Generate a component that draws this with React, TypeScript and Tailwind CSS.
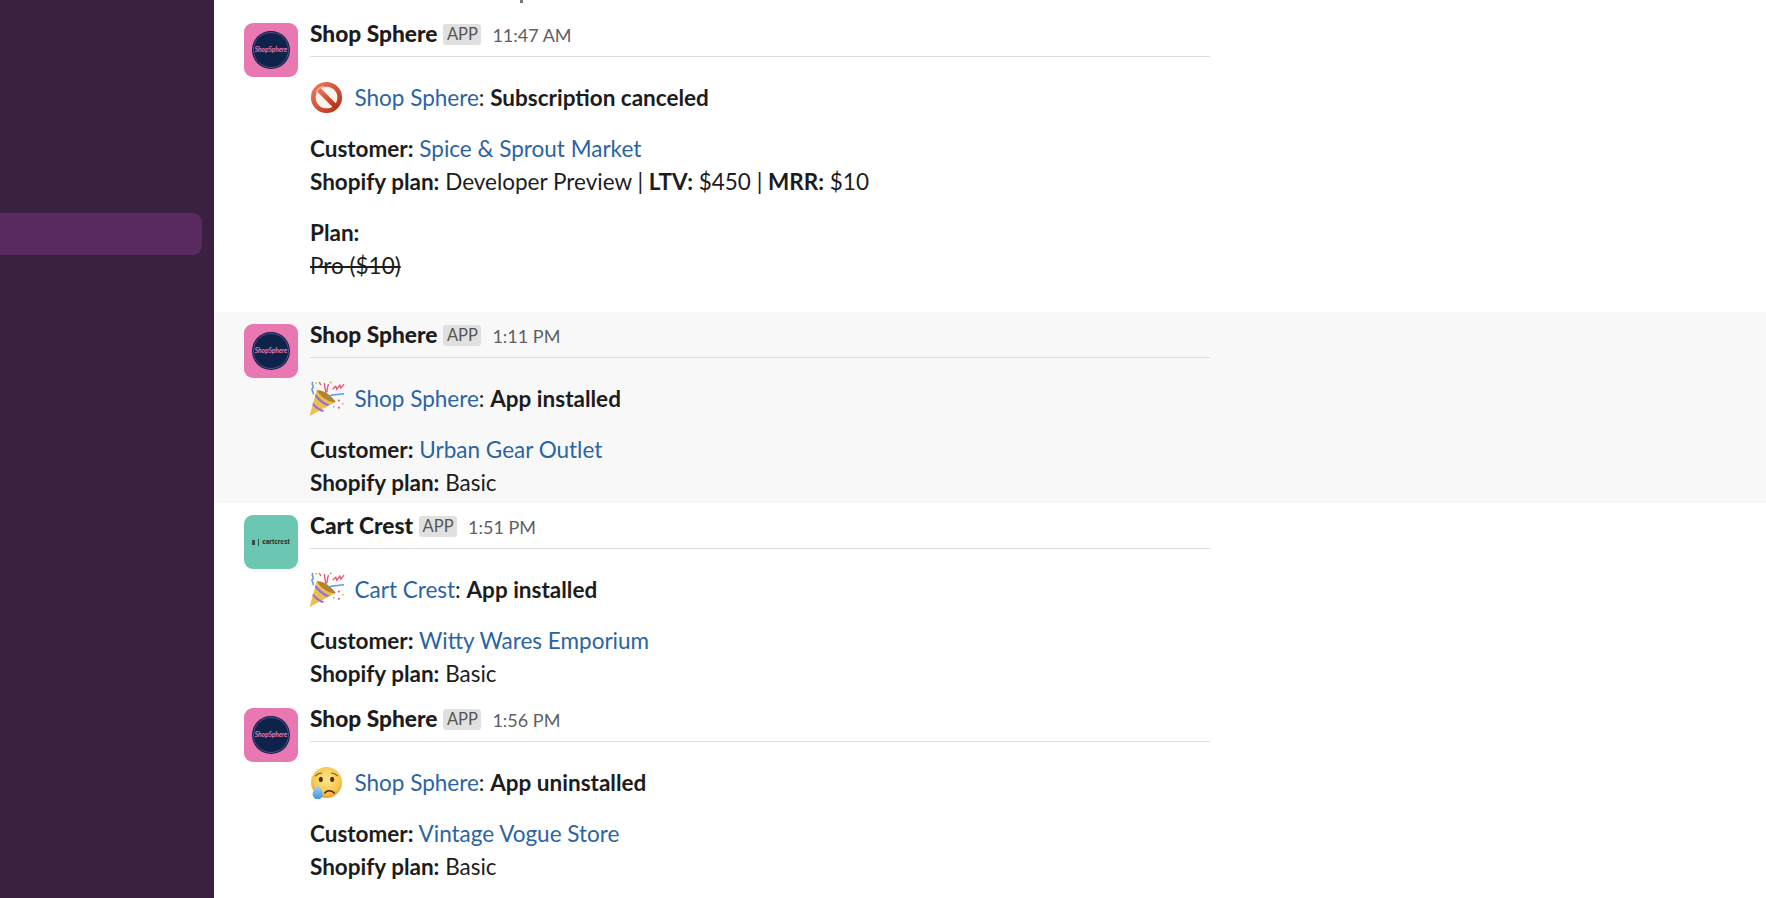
import type { ReactNode } from "react";

function BanEmoji() {
  return (
    <svg viewBox="0 0 32 32" className="w-[33px] h-[33px] shrink-0">
      <defs>
        <linearGradient id="banRed" x1="0" y1="0" x2="1" y2="1">
          <stop offset="0" stopColor="#ea7a5c" />
          <stop offset="1" stopColor="#b5301a" />
        </linearGradient>
      </defs>
      <circle cx="16" cy="16" r="12.800" fill="#fdf3ee" stroke="url(#banRed)" strokeWidth="4.600" />
      <path d="M7 7 25 25" stroke="url(#banRed)" strokeWidth="4.600" />
      <path d="M6 11c1.500-3 4-5 7-5.800" stroke="#f6c0ad" strokeWidth="1" strokeLinecap="round" fill="none" />
    </svg>
  );
}

function PartyEmoji() {
  return (
    <svg viewBox="0 0 35 35" className="w-[36px] h-[36px] shrink-0">
      <path d="M.5 34 7.500 9 26 20.500Z" fill="#ecc04c" />
      <path d="M7.500 9c6-1 15 5.500 18.500 11.500-6 1-15-5-18.500-11.500Z" fill="#b5832a" />
      <path d="M4 21c3 3.500 6.500 6 11 8l-2.500 1.200c-4-2-7-4.200-9.200-7ZM6.500 12.500c3 4.500 8 8 13.500 10.500l-2.500 1.300c-5.500-2.500-9.500-6-11.700-9.500Z" fill="#9b6fd6" />
      <path d="M4 1c-3 2 2 4-.5 6s2 3.500.5 6" stroke="#5d9be8" strokeWidth="1.500" fill="none" />
      <path d="M10 1l1.500 3M15 2c0 3 1 7 1.500 10M19 3c-1 2-1.500 5-1.500 8" stroke="#e5547a" strokeWidth="1.300" fill="none" />
      <path d="M23 8l3-3 1 3 3-4 1 3 3-4" stroke="#e5547a" strokeWidth="1.300" fill="none" />
      <path d="M18 15c5-2 10-1.500 16-2.500" stroke="#5d9be8" strokeWidth="1.500" fill="none" />
      <circle cx="7" cy="2" r="1" fill="#f0b93a" />
      <circle cx="21" cy="1.500" r="1" fill="#8dc53e" />
      <circle cx="29" cy="19" r="1" fill="#e5547a" />
      <circle cx="33" cy="22" r="0.900" fill="#f0b93a" />
      <circle cx="29" cy="26" r="1" fill="#e5547a" />
      <circle cx="24" cy="25" r="0.800" fill="#5d9be8" />
    </svg>
  );
}

function CryEmoji() {
  return (
    <svg viewBox="0 0 32 32" className="w-[33px] h-[33px] shrink-0">
      <defs>
        <radialGradient id="cryFace" cx="0.5" cy="0.4" r="0.6">
          <stop offset="0" stopColor="#fde58a" />
          <stop offset="0.7" stopColor="#f8c94f" />
          <stop offset="1" stopColor="#ee9f2c" />
        </radialGradient>
        <linearGradient id="cryTear" x1="0" y1="0" x2="0" y2="1">
          <stop offset="0" stopColor="#a7dcf5" />
          <stop offset="1" stopColor="#3f93d8" />
        </linearGradient>
      </defs>
      <circle cx="16" cy="16" r="15" fill="url(#cryFace)" />
      <path d="M5.500 9.500c1.500-1.800 3.500-2.600 5.500-2.600M26.500 9.500c-1.500-1.800-3.500-2.600-5.500-2.600" stroke="#8a5a1e" strokeWidth="1.200" strokeLinecap="round" fill="none" />
      <ellipse cx="10.500" cy="13" rx="2" ry="2.500" fill="#4a2c12" />
      <ellipse cx="21.500" cy="13" rx="2" ry="2.500" fill="#4a2c12" />
      <path d="M14.500 26c2-2.500 6-2.800 9 .2" stroke="#4a2c12" strokeWidth="1.600" strokeLinecap="round" fill="none" />
      <path d="M7.500 18c-2.500 4-5 6.500-5 9.500a5 4.800 0 0 0 10 0c0-3-2.500-5.500-5-9.500Z" fill="url(#cryTear)" />
    </svg>
  );
}

function ShopAvatar() {
  return (
    <div className="w-[54px] h-[54px] shrink-0 rounded-[9px] bg-[#e877b2] flex items-center justify-center">
      <div className="w-[38px] h-[38px] rounded-full bg-[#0e2349] flex items-center justify-center">
        <div className="w-[36px] h-[36px] rounded-full border border-[#5b4a80] flex items-center justify-center">
          <span className="text-[6.5px] leading-none font-bold italic text-[#e877b2] whitespace-nowrap">ShopSphere</span>
        </div>
      </div>
    </div>
  );
}

function CartAvatar() {
  return (
    <div className="w-[54px] h-[54px] shrink-0 rounded-[9px] bg-[#6bc7b1] flex items-center justify-center gap-[3px]">
      <span className="w-[3px] h-[5px] bg-[#33514a]"></span>
      <span className="w-px h-[7px] bg-[#33514a]"></span>
      <span className="font-['Liberation_Sans',sans-serif] text-[6.5px] leading-none font-bold text-[#1d2a28]">cartcrest</span>
    </div>
  );
}

function Link({ children }: { children: ReactNode }) {
  return <span className="text-[#2a64a3]">{children}</span>;
}

type MessageProps = {
  app: string;
  time: string;
  event: string;
  customer: string;
  emoji: ReactNode;
  avatar: ReactNode;
  hovered?: boolean;
  children?: ReactNode;
};

function Message({ app, time, event, customer, emoji, avatar, hovered, children }: MessageProps) {
  return (
    <div className={`flex gap-3 pl-[30px] pt-3 pb-[4px] ${hovered ? "bg-[#f8f8f8]" : ""}`}>
      {avatar}
      <div className="w-[900px] -mt-[6px]">
        <div className="flex items-baseline h-[38px] border-b border-[#dddddd] box-content pb-px">
          <span className="font-black text-[22.7px] leading-[33px] text-[#1d1c1d]">{app}</span>
          <span className="ml-[6px] px-[3.5px] h-[21px] relative top-[-2px] rounded-[3px] bg-[#e0e0e0] text-[#555555] text-[16.5px] leading-[21px]">APP</span>
          <span className="ml-[11px] text-[18px] text-[#616061]">{time}</span>
        </div>
        <div className="flex items-center mt-6 h-[33px]">
          <div className="w-[33px] h-[33px] shrink-0 flex items-center justify-center">{emoji}</div>
          <p className="ml-[11.5px]">
            <Link>{app}</Link>: <b className="font-bold">{event}</b>
          </p>
        </div>
        <p className="mt-[18px]">
          <b>Customer:</b> <Link>{customer}</Link>
        </p>
        {children}
      </div>
    </div>
  );
}

export default function App() {
  return (
    <div className="flex h-[898px] overflow-hidden bg-white font-['Lato',sans-serif] text-[22.5px] leading-[33px] text-[#1d1c1d]">
      <aside className="w-[214px] shrink-0 bg-[#3b2140] pt-[213px]">
        <div className="h-[42px] mr-3 rounded-r-[9px] bg-[#582a5f]"></div>
      </aside>
      <main className="flex-1">
        {/* tail of a letter from the message scrolled off above */}
        <div className="ml-[306px] w-[3px] h-[3px] mb-[8px] bg-[#777777]"></div>
        <Message
          app="Shop Sphere"
          time="11:47 AM"
          event="Subscription canceled"
          customer="Spice & Sprout Market"
          emoji={<BanEmoji />}
          avatar={<ShopAvatar />}
        >
          <p>
            <b>Shopify plan:</b> Developer Preview | <b>LTV:</b> $450 | <b>MRR:</b> $10
          </p>
          <p className="mt-[18px]"><b>Plan:</b></p>
          <p className="line-through pb-[26px]">Pro ($10)</p>
        </Message>
        <Message
          app="Shop Sphere"
          time="1:11 PM"
          event="App installed"
          customer="Urban Gear Outlet"
          emoji={<PartyEmoji />}
          avatar={<ShopAvatar />}
          hovered
        >
          <p><b>Shopify plan:</b> Basic</p>
        </Message>
        <Message
          app="Cart Crest"
          time="1:51 PM"
          event="App installed"
          customer="Witty Wares Emporium"
          emoji={<PartyEmoji />}
          avatar={<CartAvatar />}
        >
          <p className="pb-[2px]"><b>Shopify plan:</b> Basic</p>
        </Message>
        <Message
          app="Shop Sphere"
          time="1:56 PM"
          event="App uninstalled"
          customer="Vintage Vogue Store"
          emoji={<CryEmoji />}
          avatar={<ShopAvatar />}
        >
          <p><b>Shopify plan:</b> Basic</p>
        </Message>
      </main>
    </div>
  );
}
